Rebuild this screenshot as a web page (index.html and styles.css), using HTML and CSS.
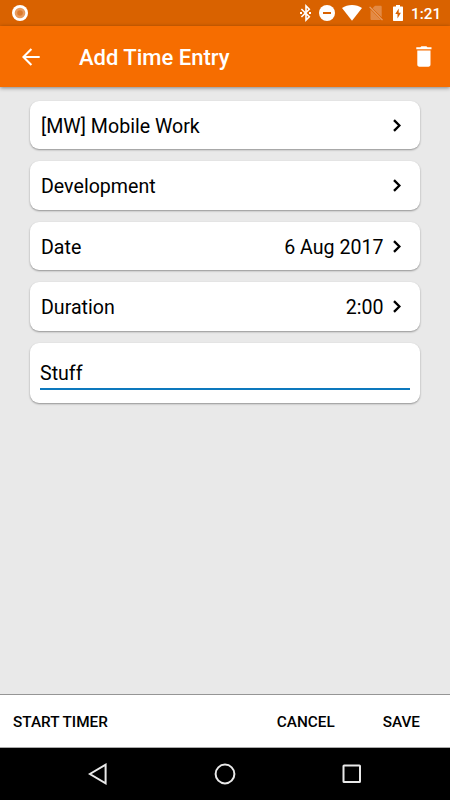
FILE: index.html
```html
<!DOCTYPE html>
<html lang="en">
<head>
<meta charset="utf-8">
<title>Add Time Entry</title>
<link rel="stylesheet" href="styles.css">
</head>
<body>
<div class="screen">
  <div class="status">
    <svg class="record" width="16" height="16" viewBox="0 0 16 16"><circle cx="8" cy="8" r="8" fill="#fff"/><circle cx="8" cy="8" r="5.3" fill="#e99b5c"/><circle cx="8" cy="8" r="2.8" fill="#dc7a2c"/></svg>
    <svg class="bt" width="12" height="18" viewBox="0 0 12 18"><path d="M1.400 5 9.300 12.800 6 16V2L9.300 5.200 1.400 13" fill="none" stroke="#fff" stroke-width="1.6"/><path d="M0 8h2v2H0zM9 8h2v2H9z" fill="#fff"/></svg>
    <svg class="dnd" width="16" height="16" viewBox="0 0 16 16"><circle cx="8" cy="8" r="8" fill="#fff"/><path d="M4 7h8v2H4z" fill="#d96200"/></svg>
    <svg class="wifi" width="20" height="16" viewBox="0 0 20 16"><path d="M0 3.1C5.6-1 14.4-1 20 3.1L10 15.8z" fill="#fff"/></svg>
    <svg class="sim" width="14" height="16" viewBox="0 0 14 16"><path d="M6 .8h5.500c.8 0 1.200.4 1.200 1.200v10.200L3.500 3.200zM1.500 4.600 12 15H2.700c-.8 0-1.200-.4-1.200-1.200z" fill="#e38a45"/><path d="M.6 1.900 13.500 15.100" stroke="#e8a06a" stroke-width="1.300"/></svg>
    <svg class="battery" width="10" height="16" viewBox="0 0 10 16"><path d="M3 0h4v1.500h2c.7 0 1 .3 1 1V15c0 .7-.3 1-1 1H1c-.7 0-1-.3-1-1V2.500c0-.7.3-1 1-1h2z" fill="#fff"/><path d="M5.700 3.400 2.300 9h2.200v4.400L7.900 7.700H5.700z" fill="#d96200"/></svg>
    <span class="clock">1:21</span>
  </div>
  <header class="appbar">
    <svg class="back" width="18" height="18" viewBox="0 0 18 18"><path d="M17.700 9H1.600M9.400 1 1.400 9l8 8" fill="none" stroke="#fff" stroke-width="2.100"/></svg>
    <h1>Add Time Entry</h1>
    <svg class="trash" width="16" height="21" viewBox="0 0 16 21"><path d="M.3 1.300h4L5.400.3h5l1.100 1h4v2H.3zM1.300 4.400h13.200v14.200c0 1.300-.8 2.100-2.100 2.100h-9c-1.300 0-2.100-.8-2.100-2.100z" fill="#fff"/></svg>
  </header>
  <main class="form">
    <div class="card"><span>[MW] Mobile Work</span><svg class="chev" width="8" height="13" viewBox="0 0 8 13"><path d="M1 1.100 6.400 6.500 1 11.900" /></svg></div>
    <div class="card"><span>Development</span><svg class="chev" width="8" height="13" viewBox="0 0 8 13"><path d="M1 1.100 6.400 6.500 1 11.900" /></svg></div>
    <div class="card"><span>Date</span><span class="value">6 Aug 2017</span><svg class="chev" width="8" height="13" viewBox="0 0 8 13"><path d="M1 1.100 6.400 6.500 1 11.900" /></svg></div>
    <div class="card"><span>Duration</span><span class="value">2:00</span><svg class="chev" width="8" height="13" viewBox="0 0 8 13"><path d="M1 1.100 6.400 6.500 1 11.900" /></svg></div>
    <div class="card note"><div class="field">Stuff</div></div>
  </main>
  <footer class="actions">
    <span class="start">START TIMER</span><span class="cancel">CANCEL</span><span>SAVE</span>
  </footer>
  <nav class="navbar">
    <svg width="20" height="22" viewBox="0 0 20 22"><path d="M17.600 1.700v18.600L1.900 11z"/></svg>
    <svg width="22" height="22" viewBox="0 0 22 22"><circle cx="11" cy="11" r="9.400"/></svg>
    <svg width="20" height="20" viewBox="0 0 20 20"><rect x="1.500" y="1.500" width="16.500" height="16.500" rx=".6"/></svg>
  </nav>
</div>
</body>
</html>
```
FILE: styles.css
```css
* { box-sizing: border-box; }
body { margin: 0; font-family: Roboto, sans-serif; color: #000; }
svg { display: block; flex: none; }
.screen { width: 450px; height: 800px; display: flex; flex-direction: column; background: #e9e9e9; overflow: hidden; }
.status { height: 26px; flex: none; display: flex; align-items: center; background: #d96200; padding: 0 10px 0 12px; }
.bt { margin-left: auto; margin-right: 7px; }
.dnd { margin-right: 7px; }
.wifi { margin-right: 7px; }
.sim { margin-right: 10px; }
.battery { margin-right: 8px; }
.clock { width: 29px; color: #fff; font-size: 15.3px; font-weight: 500; line-height: 26px; padding-top: 2px; white-space: nowrap; }
.appbar { height: 61px; flex: none; display: flex; align-items: center; padding: 0 18px 0 22px; background: #f66d00; box-shadow: 0 1px 4px rgba(0,0,0,.45); color: #fff; }
.back { margin-bottom: 0; }
.appbar h1 { margin: 3px 0 0 39px; font-size: 22px; line-height: 28px; font-weight: 500; }
.trash { margin-left: auto; margin-bottom: 1px; }
.form { flex: 1; display: flex; flex-direction: column; gap: 12.2px; padding: 14px 30px 0; }
.card { height: 48.3px; flex: none; display: flex; align-items: center; background: #fff; border-radius: 9px; box-shadow: 0 1px 2px rgba(0,0,0,.38); padding: 0 19.5px 0 11px; font-size: 19.6px; line-height: 24px; }
.card span { padding-top: 3.4px; }
.value { margin-left: auto; }
.chev { margin-left: auto; fill: none; stroke: #000; stroke-width: 2.3; }
.value + .chev { margin-left: 9px; }
.note { height: 60px; padding: 0 10px; align-items: flex-start; }
.field { width: 100%; height: 47px; padding-top: 19px; border-bottom: 2px solid #0d78bd; }
.actions { height: 54px; flex: none; display: flex; align-items: center; padding: 2px 30px 0 13px; background: #fff; border-top: 1px solid #959595; border-bottom: 1px solid #aaa; font-size: 15.3px; font-weight: 500; }
.start { margin-right: auto; }
.cancel { margin-right: 48px; }
.navbar { height: 52px; flex: none; display: flex; justify-content: space-between; align-items: center; padding: 0 88px; background: #000; }
.navbar svg { fill: none; stroke: #e9e9e9; stroke-width: 2; }
```
